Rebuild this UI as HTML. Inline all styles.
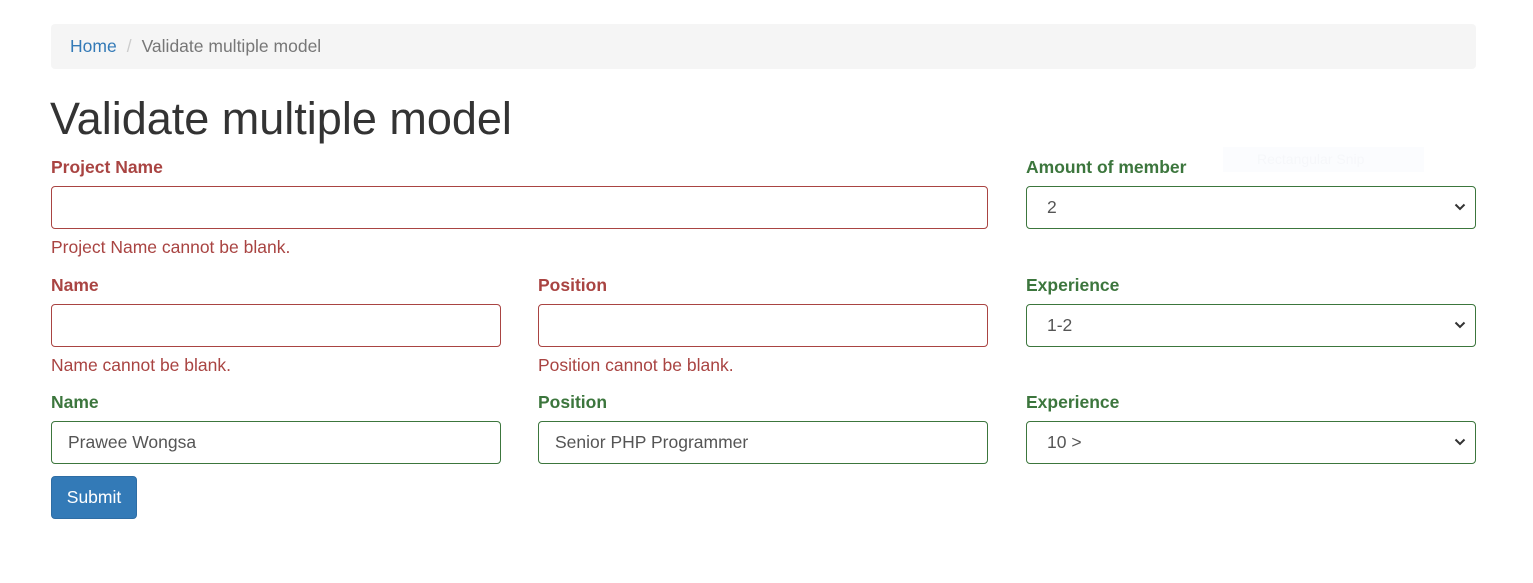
<!DOCTYPE html>
<html><head><meta charset="utf-8"><style>
*{box-sizing:border-box;margin:0;padding:0}
body{width:1533px;height:583px;background:#fff;font-family:"Liberation Sans",Arial,sans-serif;font-size:17.5px;color:#333;position:relative;overflow:hidden}
.a{position:absolute}
.bc{left:51px;top:24px;width:1425px;height:45px;background:#f5f5f5;border-radius:4px;padding:12px 19px;line-height:21px;color:#777}
.bc a{color:#337ab7;text-decoration:none}
.bc .s{color:#ccc;padding:0 10px}
h1{position:absolute;left:50px;top:94px;font-size:45px;font-weight:400;line-height:50px;color:#333}
.l{position:absolute;font-weight:bold;line-height:20px}
.r{color:#a94442}.g{color:#3c763d}
.in{position:absolute;height:43px;border:1px solid;border-radius:4px;padding:0 16px;line-height:41px;color:#555}
.in.r{border-color:#a94442}.in.g{border-color:#3c763d;color:#555}
.sel{padding-left:20px}
.e{position:absolute;color:#a94442;line-height:20px}
.sel svg{position:absolute;right:9px;top:16px}
.btn{left:51px;top:476px;width:86px;height:43px;background:#337ab7;border:1px solid #2e6da4;border-radius:4px;color:#fff;line-height:41px;text-align:center}
</style></head><body>
<div class="a bc"><a>Home</a><span class="s">/</span>Validate multiple model</div>
<h1>Validate multiple model</h1>
<div class="a" style="left:1223px;top:147px;width:201px;height:25px;background:#fbfcfe;color:#f6f7fa;font-size:14px;line-height:25px;padding-left:34px">Rectangular Snip</div>

<div class="l r" style="left:51px;top:157px">Project Name</div>
<div class="in r" style="left:51px;top:186px;width:937px"></div>
<div class="e" style="left:51px;top:237px">Project Name cannot be blank.</div>

<div class="l g" style="left:1026px;top:157px">Amount of member</div>
<div class="in g sel" style="left:1026px;top:186px;width:450px">2<svg width="12" height="8" viewBox="0 0 12 8"><path d="M1.5 1.5 6 6 10.5 1.5" fill="none" stroke="#333" stroke-width="2"/></svg></div>

<div class="l r" style="left:51px;top:275px">Name</div>
<div class="in r" style="left:51px;top:304px;width:450px"></div>
<div class="e" style="left:51px;top:355px">Name cannot be blank.</div>
<div class="l r" style="left:538px;top:275px">Position</div>
<div class="in r" style="left:538px;top:304px;width:450px"></div>
<div class="e" style="left:538px;top:355px">Position cannot be blank.</div>
<div class="l g" style="left:1026px;top:275px">Experience</div>
<div class="in g sel" style="left:1026px;top:304px;width:450px">1-2<svg width="12" height="8" viewBox="0 0 12 8"><path d="M1.5 1.5 6 6 10.5 1.5" fill="none" stroke="#333" stroke-width="2"/></svg></div>

<div class="l g" style="left:51px;top:392px">Name</div>
<div class="in g" style="left:51px;top:421px;width:450px">Prawee Wongsa</div>
<div class="l g" style="left:538px;top:392px">Position</div>
<div class="in g" style="left:538px;top:421px;width:450px">Senior PHP Programmer</div>
<div class="l g" style="left:1026px;top:392px">Experience</div>
<div class="in g sel" style="left:1026px;top:421px;width:450px">10 &gt;<svg width="12" height="8" viewBox="0 0 12 8"><path d="M1.5 1.5 6 6 10.5 1.5" fill="none" stroke="#333" stroke-width="2"/></svg></div>

<div class="a btn">Submit</div>
</body></html>
